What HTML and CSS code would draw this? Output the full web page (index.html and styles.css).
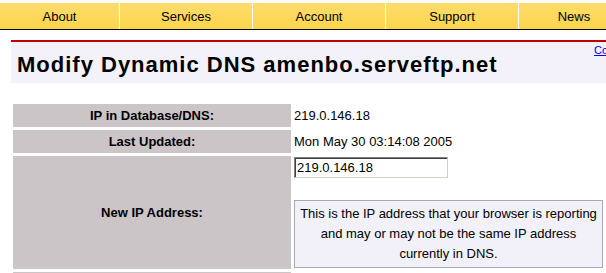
FILE: index.html
```html
<!doctype html>
<html lang="en">
<head>
  <meta charset="UTF-8" />
  <title>Modify Dynamic DNS</title>
  <link rel="stylesheet" href="styles.css">
</head>
<body>
  <div class="page">
    <nav class="topnav">
      <a href="#" class="nav-item first">About</a>
      <a href="#" class="nav-item">Services</a>
      <a href="#" class="nav-item">Account</a>
      <a href="#" class="nav-item">Support</a>
      <a href="#" class="nav-item last">News</a>
    </nav>

    <div class="content">
      <div class="title-bar">
        <h1 class="page-title">Modify Dynamic DNS amenbo.serveftp.net</h1>
        <a href="#" class="side-link">Contact</a>
      </div>

      <table class="dns-form">
        <tr>
          <th class="label">IP in Database/DNS:</th>
          <td class="value">219.0.146.18</td>
        </tr>
        <tr>
          <th class="label">Last Updated:</th>
          <td class="value">Mon May 30 03:14:08 2005</td>
        </tr>
        <tr>
          <th class="label">New IP Address:</th>
          <td class="value value-top">
            <input type="text" class="ip-input" value="219.0.146.18">
            <div class="note">This is the IP address that your browser is reporting and may or may not be the same IP address currently in DNS.</div>
          </td>
        </tr>
        <tr>
          <th class="label">&nbsp;</th>
          <td class="value"></td>
        </tr>
      </table>
    </div>
  </div>
</body>
</html>
```

FILE: styles.css
```css
* {
  margin: 0;
  padding: 0;
  box-sizing: border-box;
}

html, body {
  background: #fff;
  overflow: hidden;
  font-family: "Liberation Sans", Arial, sans-serif;
  font-size: 13px;
  color: #000;
}

.page {
  width: 640px;
  padding-top: 3px;
}

.topnav {
  display: flex;
  height: 27px;
  background: linear-gradient(#fddc6c, #fed54c);
  border-bottom: 1px solid #000;
}

.nav-item {
  width: 133px;
  display: flex;
  justify-content: center;
  align-items: center;
  color: #000;
  text-decoration: none;
  font-size: 13px;
  border-left: 1px solid #fff;
  padding-top: 1px;
}

.nav-item.first {
  width: 119px;
  border-left: none;
}

.nav-item.last {
  width: 111px;
}

.content {
  margin: 10px 0 0 11px;
}

.title-bar {
  display: flex;
  justify-content: space-between;
  align-items: flex-start;
  height: 43px;
  border-top: 2px solid #c00000;
  background: #f3f1f9;
}

.page-title {
  font-size: 22px;
  font-weight: 700;
  padding: 10px 0 0 6px;
  letter-spacing: 1px;
}

.side-link {
  color: #0000ee;
  font-size: 11px;
  margin: 2px 8px 0 0;
}

.dns-form {
  margin: 18px 0 0 2px;
  border-collapse: separate;
  border-spacing: 0 3px;
}

.label {
  width: 278px;
  background: #cbc5c8;
  font-weight: 700;
  text-align: center;
  height: 23px;
}

.value {
  padding-left: 3px;
  text-align: left;
  vertical-align: middle;
}

.value-top {
  vertical-align: top;
  padding-top: 1px;
  padding-bottom: 1px;
}

.ip-input {
  display: block;
  width: 154px;
  height: 21px;
  font-family: "Liberation Sans", Arial, sans-serif;
  font-size: 13px;
  padding: 1px 2px;
  border: 1px solid #808080;
  border-right-color: #d4d0c8;
  border-bottom-color: #d4d0c8;
  box-shadow: inset 1px 1px 0 #404040;
}

.note {
  width: 309px;
  margin-top: 22px;
  padding: 3px 0;
  border: 1px solid #a8a6b0;
  background: #f2f0f8;
  text-align: center;
  line-height: 20px;
}
```
